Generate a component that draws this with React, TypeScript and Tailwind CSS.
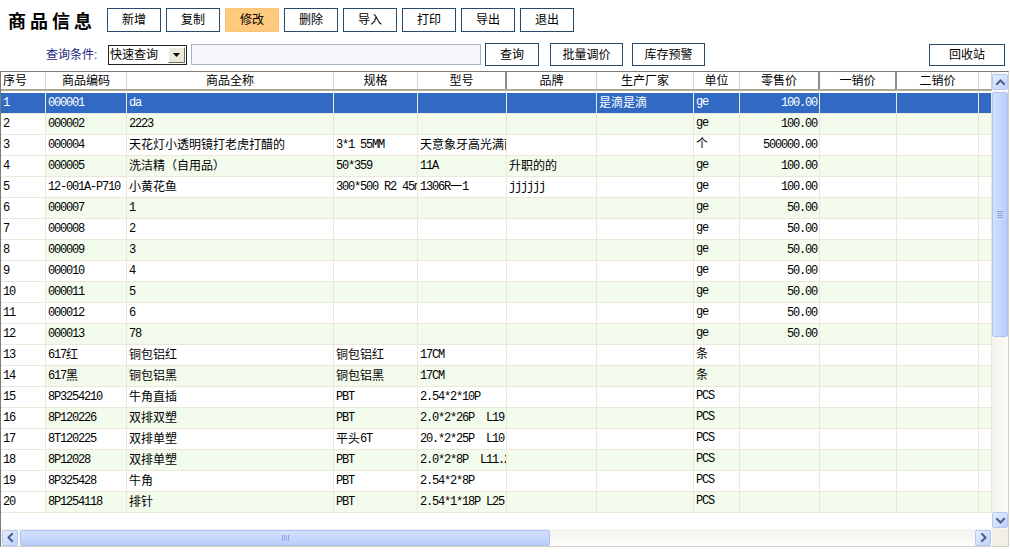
import React from "react";

const COLW = [
  "w-[45px]",
  "w-[81px]",
  "w-[207px]",
  "w-[84px]",
  "w-[89px]",
  "w-[90px]",
  "w-[97px]",
  "w-[46px]",
  "w-[80px]",
  "w-[77px]",
  "w-[82px]",
  "w-[13px]",
];

const HEADERS = ["序号", "商品编码", "商品全称", "规格", "型号", "品牌", "生产厂家", "单位", "零售价", "一销价", "二销价", ""];

const ROWS: string[][] = [
  ["1", "000001", "da", "", "", "", "是滴是滴", "ge", "100.00"],
  ["2", "000002", "2223", "", "", "", "", "ge", "100.00"],
  ["3", "000004", "天花灯小透明镜打老虎打醋的", "3*1 55MM", "天意象牙高光满面", "", "", "个", "500000.00"],
  ["4", "000005", "洗洁精（自用品）", "50*359", "11A", "升职的的", "", "ge", "100.00"],
  ["5", "12-001A-P710", "小黄花鱼", "300*500 R2 45mm", "1306R一1", "jjjjjj", "", "ge", "100.00"],
  ["6", "000007", "1", "", "", "", "", "ge", "50.00"],
  ["7", "000008", "2", "", "", "", "", "ge", "50.00"],
  ["8", "000009", "3", "", "", "", "", "ge", "50.00"],
  ["9", "000010", "4", "", "", "", "", "ge", "50.00"],
  ["10", "000011", "5", "", "", "", "", "ge", "50.00"],
  ["11", "000012", "6", "", "", "", "", "ge", "50.00"],
  ["12", "000013", "78", "", "", "", "", "ge", "50.00"],
  ["13", "617红", "铜包铝红", "铜包铝红", "17CM", "", "", "条", ""],
  ["14", "617黑", "铜包铝黑", "铜包铝黑", "17CM", "", "", "条", ""],
  ["15", "8P3254210", "牛角直插", "PBT", "2.54*2*10P", "", "", "PCS", ""],
  ["16", "8P120226", "双排双塑", "PBT", "2.0*2*26P  L19", "", "", "PCS", ""],
  ["17", "8T120225", "双排单塑", "平头6T", "20.*2*25P  L10", "", "", "PCS", ""],
  ["18", "8P12028", "双排单塑", "PBT", "2.0*2*8P  L11.2", "", "", "PCS", ""],
  ["19", "8P325428", "牛角", "PBT", "2.54*2*8P", "", "", "PCS", ""],
  ["20", "8P1254118", "排针", "PBT", "2.54*1*18P L25", "", "", "PCS", ""],
];

function Mixed({ text }: { text: string }) {
  const parts = text.match(/[\x20-\x7e]+|[^\x20-\x7e]+/g) || [];
  return (
    <>
      {parts.map((p, i) =>
        /^[\x20-\x7e]+$/.test(p) ? (
          <span key={i} className="font-['Liberation_Mono',monospace] tracking-[-1.2px] whitespace-pre">
            {p}
          </span>
        ) : (
          <span key={i} className="whitespace-pre">{p}</span>
        )
      )}
    </>
  );
}

function ToolButton({ label, active, w = "w-[54px]", h = "h-[24px]" }: { label: string; active?: boolean; w?: string; h?: string }) {
  return (
    <button
      className={`${w} ${h} shrink-0 flex items-center justify-center text-[12px] leading-none text-black border ${
        active ? "bg-[#fecb7e] border-[#f9c47a]" : "bg-white border-[#26496c]"
      }`}
    >
      {label}
    </button>
  );
}

function Chevron({ dir }: { dir: "up" | "down" | "left" | "right" }) {
  const pts =
    dir === "up" ? "3,8 6.5,4.5 10,8" : dir === "down" ? "3,5 6.5,8.5 10,5" : dir === "left" ? "8,3 4.5,6.5 8,10" : "5,3 8.5,6.5 5,10";
  return (
    <svg width="13" height="13" viewBox="0 0 13 13">
      <polyline points={pts} fill="none" stroke="#4d6185" strokeWidth="2" strokeLinecap="square" />
    </svg>
  );
}

function ScrollBtn({ dir }: { dir: "up" | "down" | "left" | "right" }) {
  return (
    <div className="w-[16px] h-[16px] shrink-0 rounded-[2px] border border-[#b4c8f5] bg-gradient-to-br from-[#e6eefe] to-[#bfd1fb] flex items-center justify-center">
      <Chevron dir={dir} />
    </div>
  );
}

export default function App() {
  return (
    <div className="w-[1010px] h-[553px] bg-white overflow-hidden font-['Liberation_Sans','Noto_Sans_CJK_SC',sans-serif] text-black">
      {/* toolbar row 1 */}
      <div className="flex items-center pt-[8px] h-[32px]">
        <div className="w-[107px] shrink-0 pl-[8px] text-[18px] font-bold tracking-[4px] leading-none font-['Noto_Sans_CJK_SC',sans-serif]">
          商品信息
        </div>
        <div className="flex gap-[5px]">
          <ToolButton label="新增" />
          <ToolButton label="复制" />
          <ToolButton label="修改" active />
          <ToolButton label="删除" />
          <ToolButton label="导入" />
          <ToolButton label="打印" />
          <ToolButton label="导出" />
          <ToolButton label="退出" />
        </div>
      </div>

      {/* toolbar row 2 */}
      <div className="flex items-center mt-[11px] h-[23px] pl-[46px]">
        <span className="text-[12px] leading-none text-[#1b2383] w-[62px] shrink-0">查询条件:</span>
        <div className="w-[79px] h-[20px] shrink-0 border border-[#222] flex items-center justify-between pl-[1px] pr-[1px]">
          <span className="text-[12px] leading-none">快速查询</span>
          <div className="w-[17px] h-[16px] bg-[#ece9d8] border border-t-white border-l-white border-r-[#716f64] border-b-[#716f64] flex items-center justify-center">
            <svg width="7" height="4" viewBox="0 0 7 4">
              <polygon points="0,0 7,0 3.5,4" fill="#000" />
            </svg>
          </div>
        </div>
        <div className="w-[290px] h-[21px] ml-[4px] shrink-0 border border-[#a9b4c2] bg-[#f8f6fa]" />
        <div className="ml-[4px]">
          <ToolButton label="查询" h="h-[23px]" />
        </div>
        <div className="ml-[11px]">
          <ToolButton label="批量调价" w="w-[73px]" h="h-[23px]" />
        </div>
        <div className="ml-[9px]">
          <ToolButton label="库存预警" w="w-[73px]" h="h-[23px]" />
        </div>
        <div className="flex-1" />
        <div className="mr-[5px]">
          <ToolButton label="回收站" w="w-[76px]" h="h-[22px]" />
        </div>
      </div>

      {/* grid */}
      <div className="mt-[5px] w-[1009px] h-[476px] border-l border-t border-[#7c7b78] border-r-[#d4d0c8] border-b-[#d4d0c8] border-r border-b flex flex-col">
        <div className="flex h-[457px]">
          <div className="w-[991px] h-[457px] overflow-hidden bg-white">
            {/* header */}
            <div className="flex h-[19px] border-b-2 border-[#aeab9d] text-[12px] leading-none">
              {HEADERS.map((h, j) => (
                <div
                  key={j}
                  className={`${COLW[j]} shrink-0 flex items-center justify-center ${
                    j === 4 || j === 8 || j === 9 ? "border-r-2 border-[#8e8c84]" : "border-r border-[#d9d5c6]"
                  } ${j === 0 ? "justify-start pl-[2px]" : ""}`}
                >
                  {h}
                </div>
              ))}
            </div>
            <div className="h-[2px]" />
            {ROWS.map((r, i) => {
              const selected = i === 0;
              const stripe = i % 2 === 1;
              return (
                <div
                  key={i}
                  className={`flex h-[21px] border-b border-[#ebe8da] text-[12px] leading-none ${
                    selected ? "bg-[#316ac5] text-white" : ""
                  }`}
                >
                  {COLW.map((w, j) => {
                    const t = r[j] || "";
                    return (
                      <div
                        key={j}
                        className={`${w} shrink-0 border-r border-[#ebe8da] overflow-hidden whitespace-nowrap flex ${
                          j === 8 ? "justify-end pr-[2px]" : "pl-[2px]"
                        } ${j === 7 ? "items-start pt-[3px]" : "items-center"} ${
                          stripe && j > 0 ? "bg-[#f2fbec]" : ""
                        }`}
                      >
                        <Mixed text={t} />
                      </div>
                    );
                  })}
                </div>
              );
            })}
          </div>
          {/* vertical scrollbar */}
          <div className="w-[16px] h-[457px] bg-gradient-to-r from-[#f3f2ec] to-[#fbfbf8] flex flex-col">
            <div className="h-[2px]" />
            <ScrollBtn dir="up" />
            <div className="h-[2px]" />
            <div className="h-[245px] rounded-[2px] border border-[#aec3f1] bg-gradient-to-r from-[#d3e0fd] to-[#bacdf9] flex flex-col items-center justify-center gap-[1px]">
              <div className="w-[6px] h-[1px] bg-[#8fa9e4]" />
              <div className="w-[6px] h-[1px] bg-[#8fa9e4]" />
              <div className="w-[6px] h-[1px] bg-[#8fa9e4]" />
              <div className="w-[6px] h-[1px] bg-[#8fa9e4]" />
            </div>
            <div className="flex-1" />
            <ScrollBtn dir="down" />
            <div className="h-[1px]" />
          </div>
        </div>
        {/* horizontal scrollbar */}
        <div className="flex h-[17px]">
          <div className="w-[991px] h-[17px] bg-gradient-to-b from-[#f4f3ee] to-[#fbfbf8] flex items-center pl-[1px]">
            <ScrollBtn dir="left" />
            <div className="ml-[2px] w-[530px] h-[16px] rounded-[2px] border border-[#aec3f1] bg-gradient-to-b from-[#d3e0fd] to-[#bacdf9] flex items-center justify-center gap-[1px]">
              <div className="w-[1px] h-[6px] bg-[#8fa9e4]" />
              <div className="w-[1px] h-[6px] bg-[#8fa9e4]" />
              <div className="w-[1px] h-[6px] bg-[#8fa9e4]" />
              <div className="w-[1px] h-[6px] bg-[#8fa9e4]" />
            </div>
            <div className="flex-1" />
            <ScrollBtn dir="right" />
            <div className="w-[1px]" />
          </div>
          <div className="w-[16px] h-[17px] bg-[#f1efe7]" />
        </div>
      </div>
    </div>
  );
}
